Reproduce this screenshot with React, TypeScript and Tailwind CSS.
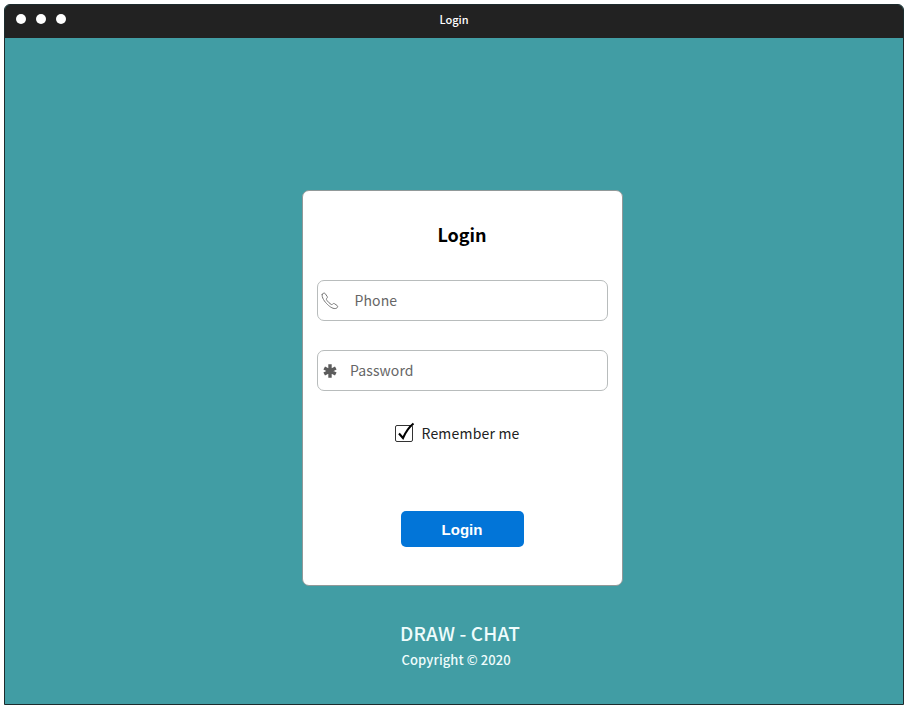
import React from "react";

function PhoneIcon() {
  return (
    <svg width="18" height="18" viewBox="0 0 18 18" fill="none" stroke="#777" strokeWidth="1" strokeLinejoin="round" strokeLinecap="round">
      <path d="M1.3 2.2 C2 1.2 3.4 .7 4.1 1.5 L6.2 4.5 C6.7 5.3 6.3 5.9 5.5 6.6 C5.1 7.1 5.4 7.7 6 8.5 C7.2 10.1 8.6 11.5 10 12.3 C10.8 12.8 11.2 12.6 11.6 12.1 C12.2 11.4 12.8 11.3 13.5 11.7 L16.2 13.6 C17.2 14.5 16.4 15.8 15.3 16.3 C12.6 17.4 9.1 15 6.6 12.6 C3.9 10 .1 5.3 1.3 2.2 Z" />
    </svg>
  );
}

function AsteriskIcon() {
  return (
    <svg width="14" height="14" viewBox="0 0 14 14" stroke="#5c5c5c" strokeWidth="3.4" strokeLinejoin="round" strokeLinecap="butt">
      <path d="M7 .3v13.4M1.2 3.9l11.6 6.2M1.2 10.1l11.6-6.2" />
    </svg>
  );
}

function CheckedBox() {
  return (
    <svg width="22" height="22" viewBox="0 0 22 22" fill="none">
      <rect x="1.5" y="3.5" width="17" height="16" rx="1.5" stroke="#333" strokeWidth="1" />
      <path d="M5 11.5 L9 16 C11 11.5 14.5 5.5 19.5 1.5" stroke="#000" strokeWidth="2.1" />
    </svg>
  );
}

export default function App() {
  return (
    <div className="h-[707px] w-[909px] overflow-hidden bg-white pl-1 pt-1 font-['Noto_Sans_CJK_SC',sans-serif]">
      <div className="flex h-[701px] w-[900px] flex-col overflow-hidden rounded-t-[6px] border border-[#1d2b2d] bg-[#419da4]">
        <header className="flex h-[33px] shrink-0 items-start bg-[#222]">
          <div className="flex w-[200px] gap-[10px] pl-[10.5px] pt-[9px]">
            <span className="size-[10px] rounded-full bg-white" />
            <span className="size-[10px] rounded-full bg-white" />
            <span className="size-[10px] rounded-full bg-white" />
          </div>
          <div className="flex flex-1 justify-center pt-[6px] text-[11px] font-medium leading-4 text-white">
            <span>Login</span>
          </div>
          <div className="w-[200px]" />
        </header>
        <main className="flex flex-col pl-[297px] pt-[152px]">
          <section className="flex h-[396px] w-[321px] flex-col items-center rounded-[7px] border border-[#919999] bg-white pt-[30px]">
            <h1 className="mr-px text-[18px] font-bold leading-[26px] text-black">Login</h1>
            <div className="mt-[33px] flex h-[41px] w-[291px] items-center rounded-[7px] border border-[#b8bcbc] pl-[3px] text-[14px] tracking-[0.1px] text-[#666]">
              <PhoneIcon />
              <span className="ml-[15.5px]">Phone</span>
            </div>
            <div className="mt-[29px] flex h-[41px] w-[291px] items-center rounded-[7px] border border-[#b8bcbc] pl-[4.5px] text-[14px] tracking-[0.1px] text-[#666]">
              <AsteriskIcon />
              <span className="ml-[13.5px]">Password</span>
            </div>
            <div className="mr-[11px] mt-[31px] flex h-[22px] items-center gap-[5px] text-[14px] tracking-[0.2px] text-[#222]">
              <CheckedBox />
              <span>Remember me</span>
            </div>
            <button className="mt-[67px] h-[36px] w-[123px] rounded-[5px] bg-[#0275d8] pr-px pt-[2px] font-['Liberation_Sans',sans-serif] text-[15px] font-bold text-white">Login</button>
          </section>
          <footer className="flex flex-col items-start pl-[98px] pt-[33px] text-[#effcfc]">
            <span className="text-[19px] font-medium leading-7 tracking-[0.15px]">DRAW - CHAT</span>
            <span className="ml-[1.5px] mt-px text-[13px] font-medium leading-6 tracking-[0.1px]">Copyright © 2020</span>
          </footer>
        </main>
      </div>
    </div>
  );
}
